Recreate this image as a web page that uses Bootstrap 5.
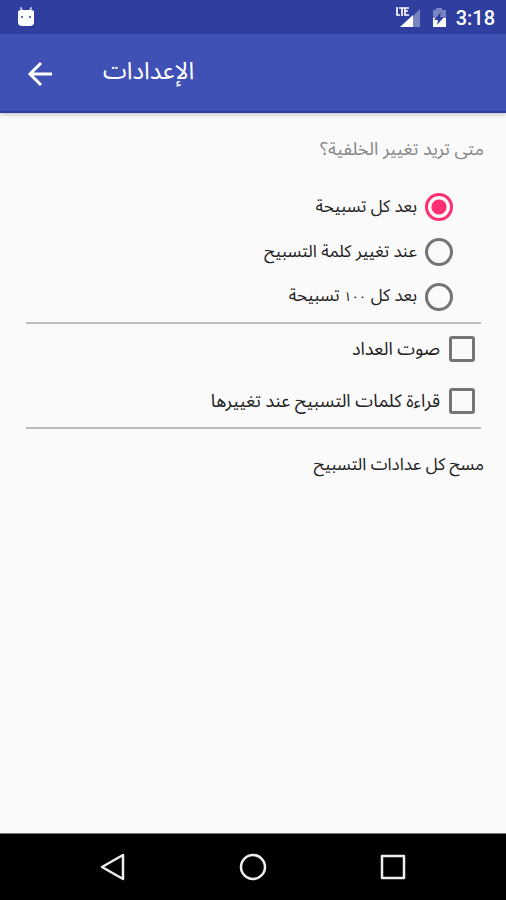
<!DOCTYPE html>
<html lang="ar">
<head>
<meta charset="utf-8">
<meta name="viewport" content="width=device-width, initial-scale=1">
<title>الإعدادات</title>
<link href="https://cdn.jsdelivr.net/npm/bootstrap@5.3.0/dist/css/bootstrap.min.css" rel="stylesheet">
<style>
body { background: #fafafa; color: #212121; font-family: "Noto Sans Arabic", "Noto Sans", Roboto, sans-serif; font-size: 17px; line-height: 24px; }
.status-bar { background: #303f9f; height: 34px; padding: 0 11px 0 16px; }
.clock { font-family: Roboto, sans-serif; font-size: 20px; font-weight: 500; padding-top: 2px; }
.app-bar { background: #3f51b5; height: 79px; padding: 0 24px; gap: 47px; border-bottom: 2px solid #2f3f9c; box-shadow: 0 2px 4px rgba(0, 0, 0, .2); }
.app-title { font-size: 24px; line-height: 32px; font-weight: 400; padding-bottom: 2px; }
.question { color: #868686; font-size: 18px; line-height: 24px; }
.settings { padding: 24px 22px 0 24px; }
.choices { padding: 23px 31px 3px 0; }
.choice { height: 45px; gap: 8px; }
.choice.tall { height: 52px; gap: 9px; font-size: 18px; }
.toggles { padding-right: 9px; margin-top: -1px; }
.count { font-size: 13px; }
.choice .form-check-input { border: 3px solid #757575; background-color: transparent; box-shadow: none; }
.choice .form-check-input[type=radio] { width: 28px; height: 28px; }
.choice .form-check-input[type=checkbox] { width: 26px; height: 26px; border-radius: 3px; }
.choice .form-check-input[type=radio]:checked { border-color: #ff2f73; background-image: radial-gradient(circle, #ff2f73 0 7px, transparent 8px); background-size: auto; }
.choice .form-check-input[type=checkbox]:checked { background-color: #ff2f73; border-color: #ff2f73; }
.rule { border-top: 2px solid #bdbdbd; opacity: 1; margin: 0 3px 0 2px; }
.clear-link { color: #212121; margin-top: 24px; font-size: 17px; line-height: 24px; }
.nav-keys { background: #000; height: 67px; border-top: 1px solid #777; padding: 0 43px; }
.nav-keys .btn { width: 140px; }
</style>
<script src="https://cdn.jsdelivr.net/npm/bootstrap@5.3.0/dist/js/bootstrap.bundle.min.js" defer></script>
</head>
<body class="d-flex flex-column min-vh-100">
<div class="status-bar d-flex align-items-center justify-content-between text-white">
  <svg width="20" height="22" viewBox="0 0 20 22" aria-hidden="true">
    <path d="M5 2l1 3M15 2l-1 3" stroke="#fff" stroke-opacity=".7" stroke-width="2" stroke-linecap="round"/>
    <path d="M2 6Q2 4 5 4h10q3 0 3 2v10q0 4-4 4H6q-4 0-4-4z" fill="#fff"/>
    <circle cx="6" cy="11" r="1" fill="#303f9f"/><circle cx="14" cy="11" r="1" fill="#303f9f"/>
  </svg>
  <div class="d-flex align-items-center">
    <svg width="27" height="22" viewBox="0 0 27 22" aria-hidden="true">
      <path d="M27 3v18H7l10-8z" fill="#7984c3"/>
      <path d="M20 9v12H7z" fill="#fff"/>
      <path d="M4 1v8h3M6 2h5M9 2v8M16 2h-4v7h4M12 5h3" fill="none" stroke="#fff" stroke-width="1.700"/>
    </svg>
    <svg class="ms-2" width="20" height="22" viewBox="0 0 20 22" aria-hidden="true">
      <path d="M5 4h3V2h6v2h4v9H5z" fill="#7984c3"/>
      <path d="M5 12h13v9H5z" fill="#fff"/>
      <path d="M13 6l-7 8h4l-1 5 7-8h-4z" fill="#303f9f"/>
    </svg>
    <span class="clock ms-2">3:18</span>
  </div>
</div>
<header class="app-bar d-flex align-items-center text-white">
  <button class="btn p-0 border-0 d-flex" type="button" aria-label="رجوع">
    <svg width="32" height="32" viewBox="0 0 32 32" fill="none" stroke="#fff" stroke-width="3"><path d="M28 17H7M17 6L6 17l11 11"/></svg>
  </button>
  <h1 class="app-title m-0" dir="rtl">الإعدادات</h1>
</header>
<main class="settings flex-grow-1" dir="rtl">
  <fieldset>
    <legend class="question m-0">متى تريد تغيير الخلفية؟</legend>
    <div class="choices">
      <div class="choice d-flex align-items-center"><input class="form-check-input m-0" type="radio" name="when" id="w1" checked><label for="w1">بعد كل تسبيحة</label></div>
      <div class="choice d-flex align-items-center"><input class="form-check-input m-0" type="radio" name="when" id="w2"><label for="w2">عند تغيير كلمة التسبيح</label></div>
      <div class="choice d-flex align-items-center"><input class="form-check-input m-0" type="radio" name="when" id="w3"><label for="w3">بعد كل <span class="count">١٠٠</span> تسبيحة</label></div>
    </div>
  </fieldset>
  <hr class="rule">
  <div class="toggles">
    <div class="choice tall d-flex align-items-center"><input class="form-check-input m-0" type="checkbox" id="c1"><label for="c1">صوت العداد</label></div>
    <div class="choice tall d-flex align-items-center"><input class="form-check-input m-0" type="checkbox" id="c2"><label for="c2">قراءة كلمات التسبيح عند تغييرها</label></div>
  </div>
  <hr class="rule">
  <button class="clear-link btn p-0 border-0 d-block" type="button">مسح كل عدادات التسبيح</button>
</main>
<nav class="nav-keys d-flex align-items-center justify-content-between">
  <button class="btn p-0 border-0" type="button" aria-label="رجوع"><svg width="30" height="30" viewBox="0 0 30 30" fill="none" stroke="#eee" stroke-width="2.500" stroke-linejoin="round"><path d="M25 3v24L4 15z"/></svg></button>
  <button class="btn p-0 border-0" type="button" aria-label="الرئيسية"><svg width="30" height="30" viewBox="0 0 30 30" fill="none" stroke="#eee" stroke-width="2.500"><circle cx="15" cy="15" r="12"/></svg></button>
  <button class="btn p-0 border-0" type="button" aria-label="التطبيقات الأخيرة"><svg width="30" height="30" viewBox="0 0 30 30" fill="none" stroke="#eee" stroke-width="2.500" stroke-linejoin="round"><path d="M4 4h22v22H4z"/></svg></button>
</nav>
</body>
</html>
